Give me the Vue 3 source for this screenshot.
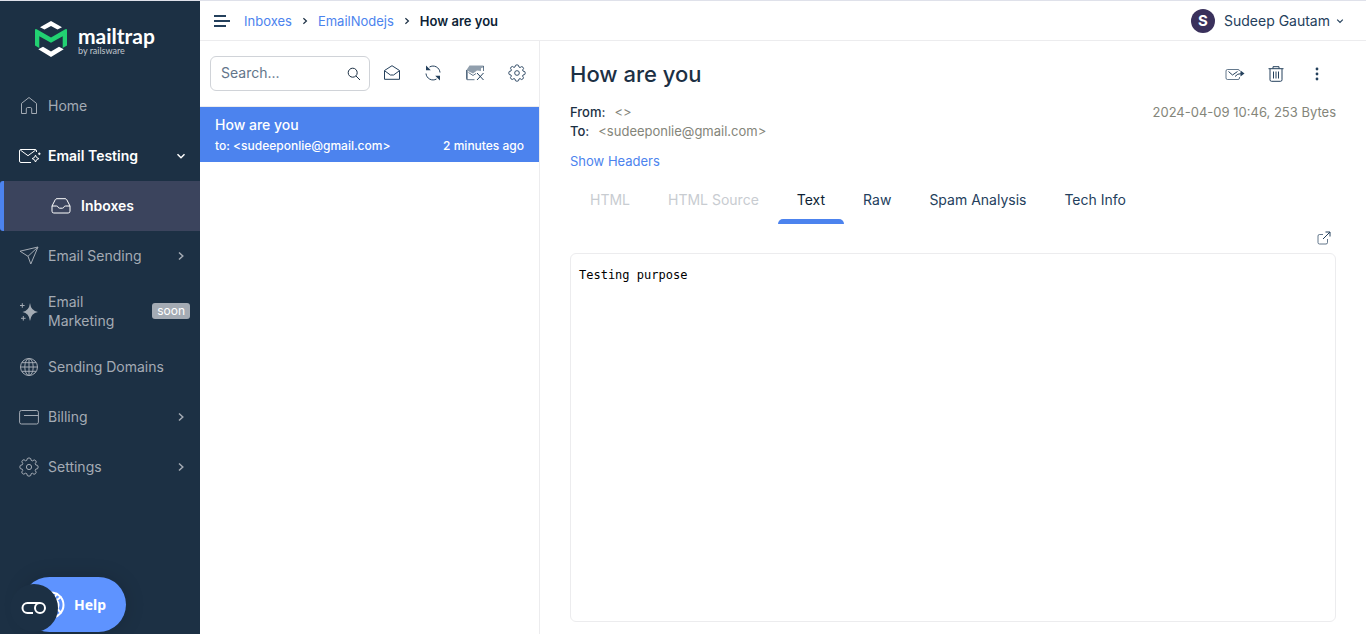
<script setup>
import { ref } from 'vue'

const search = ref('')

const tabs = [
  { label: 'HTML', disabled: true },
  { label: 'HTML Source', disabled: true },
  { label: 'Text', active: true },
  { label: 'Raw' },
  { label: 'Spam Analysis' },
  { label: 'Tech Info' },
]
</script>

<template>
  <div class="app">
    <svg class="defs" aria-hidden="true">
      <symbol id="gear" viewBox="0 0 20 20">
        <path stroke-linejoin="round" d="M8.300 1.500Q10 .3 11.700 1.500L12.200 3.400 13.400 3.900 15.200 2.900Q17.100 3.200 17.300 5L16.200 6.700 16.700 7.900 18.600 8.400Q19.800 10 18.600 11.700L16.700 12.200 16.200 13.400 17.200 15.200Q16.900 17.100 15 17.300L13.400 16.200 12.200 16.700 11.700 18.600Q10 19.800 8.300 18.600L7.800 16.700 6.600 16.200 4.800 17.200Q2.900 16.900 2.700 15L3.800 13.400 3.300 12.200 1.400 11.700Q.2 10 1.400 8.300L3.300 7.800 3.800 6.600 2.800 4.800Q3.100 2.900 5 2.700L6.600 3.800 7.800 3.300z" />
        <circle cx="10" cy="10" r="2.600" />
      </symbol>
      <symbol id="right" viewBox="0 0 10 10"><path d="M3 1.500 6.800 5 3 8.500" /></symbol>
      <symbol id="down" viewBox="0 0 10 10"><path d="M1.500 3.300 5 6.700l3.500-3.400" /></symbol>
    </svg>

    <aside class="sidebar">
      <a class="logo" href="#">
        <svg width="34" height="36" viewBox="0 0 34 36" aria-hidden="true">
          <path fill="#fff" d="M17 0 28 6.300 23.500 8.400 17 4.900l-6.500 3.500L6 6.300zM17 36 4.300 28.200 9 25.700l8 4.800 8-4.800 4.700 2.500z" />
          <path fill="#22d172" d="M1 9.200Q1 7.400 2.700 8.300L17 16.400 31.300 8.300Q33 7.400 33 9.200V24.500L28.700 27V15.200L17 21.800 5.300 15.200V27L1 24.500z" />
        </svg>
        <span class="brand">
          <span class="name">mailtrap</span>
          <span class="by">by railsware</span>
        </span>
      </a>

      <nav class="nav">
        <a class="item" href="#">
          <svg class="ico" viewBox="0 0 20 20"><path d="M2.500 7.400 10 1.500l7.500 5.900V17.500h-4.800v-4.600q0-1.400-1.300-1.400H8.600q-1.300 0-1.300 1.400v4.600H2.500z" /></svg>
          <span class="label">Home</span>
        </a>
        <a class="item current" href="#">
          <svg class="ico wide" viewBox="0 0 22 20"><path d="M12 16.500H2Q.500 16.500.500 15V5Q.500 3.500 2 3.500h14Q17.500 3.500 17.500 5v1M1.500 4.200 9 9.700 16.500 4.200M16.500 9.200l1.100 2.300 2.300 1.100-2.300 1.100-1.100 2.300-1.100-2.300-2.300-1.100 2.300-1.100zM20.300 6.500v2.600M19 7.800h2.600" /></svg>
          <span class="label">Email Testing</span>
          <svg class="chev"><use href="#down" /></svg>
        </a>
        <a class="item sub current" href="#">
          <svg class="ico" viewBox="0 0 20 20"><path d="M1 10 4.300 3.600Q4.800 2.700 6 2.700h8q1.200 0 1.700.9L19 10v5.200q0 1.800-1.800 1.800H2.800Q1 17 1 15.200zM1 10h4.500q1.200 0 1.600 1.100.4 1.100 1.500 1.100h2.800q1.100 0 1.500-1.100.4-1.100 1.600-1.100H19" /></svg>
          <span class="label">Inboxes</span>
        </a>
        <a class="item" href="#">
          <svg class="ico" viewBox="0 0 20 20"><path d="M1 5.200 19 1 11.800 18 9 10.300zM9 10.300 19 1" /></svg>
          <span class="label">Email Sending</span>
          <svg class="chev"><use href="#right" /></svg>
        </a>
        <a class="item tall" href="#">
          <svg class="ico" viewBox="0 0 20 20"><path class="fill" d="M11 1Q12 9 19 10 12 11 11 19 10 11 3.500 10 10 9 11 1z" /><path d="M3.300 1.200v4.600M1 3.500h4.600M4.300 14v4.600M2 16.300h4.600" /></svg>
          <span class="label">Email Marketing</span>
          <span class="soon">soon</span>
        </a>
        <a class="item" href="#">
          <svg class="ico" viewBox="0 0 20 20"><circle cx="10" cy="10" r="8.500" /><ellipse cx="10" cy="10" rx="4.200" ry="8.500" /><path d="M10 1.500v17M1.500 10h17M2.700 5.700h14.600M2.700 14.300h14.600" /></svg>
          <span class="label">Sending Domains</span>
        </a>
        <a class="item" href="#">
          <svg class="ico" viewBox="0 0 20 20"><rect x=".600" y="3.500" width="18.800" height="13.500" rx="1.800" /><path d="M5 8.500h14" /></svg>
          <span class="label">Billing</span>
          <svg class="chev"><use href="#right" /></svg>
        </a>
        <a class="item" href="#">
          <svg class="ico"><use href="#gear" /></svg>
          <span class="label">Settings</span>
          <svg class="chev"><use href="#right" /></svg>
        </a>
      </nav>

      <button class="help" type="button">
        <svg width="28" height="28" viewBox="0 0 28 28" aria-hidden="true"><circle cx="14" cy="14" r="12.500" /><circle cx="14" cy="14" r="7.500" /><path d="m17 7 3.500-5M20 9l4.500-3.500M20.500 18l4 4.500M17.500 21l3 5" /></svg>
        Help
      </button>
      <button class="cookie" type="button" aria-label="Cookie settings">
        <svg width="26" height="14" viewBox="0 0 26 14"><path d="M12 12H6.500a5 5 0 0 1 0-10H19" /><circle cx="19" cy="7" r="5" /></svg>
      </button>
    </aside>

    <div class="page">
      <header class="top">
        <button class="icon-btn burger" type="button" aria-label="Toggle menu">
          <svg width="16" height="14" viewBox="0 0 16 14"><path d="M0 2h12M0 7h16M0 12h12" /></svg>
        </button>
        <nav class="crumbs" aria-label="Breadcrumb">
          <a href="#">Inboxes</a>
          <svg><use href="#right" /></svg>
          <a href="#">EmailNodejs</a>
          <svg><use href="#right" /></svg>
          <strong>How are you</strong>
        </nav>
        <button class="user" type="button">
          <span class="avatar">S</span>
          <span>Sudeep Gautam</span>
          <svg class="chev"><use href="#down" /></svg>
        </button>
      </header>

      <div class="body">
        <section class="list">
          <div class="tools">
            <label class="search">
              <input v-model="search" type="text" placeholder="Search..." aria-label="Search" />
              <svg width="14" height="14" viewBox="0 0 14 14"><circle cx="5.700" cy="5.700" r="4.500" /><path d="m9 9 4 4" /></svg>
            </label>
            <div class="tool-icons">
              <button class="icon-btn" type="button" aria-label="Mark all as read">
                <svg width="18" height="18" viewBox="0 0 18 18"><path d="M1.500 6.500 9 1.700l7.500 4.800v8.800H1.500zM1.700 6.800 7.400 11h3.200l5.700-4.200" /></svg>
              </button>
              <button class="icon-btn" type="button" aria-label="Refresh">
                <svg width="18" height="18" viewBox="0 0 18 18"><path d="M5.500 3A7 7 0 0 1 16 8.500M12.500 15A7 7 0 0 1 2 9.500" /><path class="fill" d="M2 1.500v4.800h4.800zM16 16.500v-4.800h-4.800z" /></svg>
              </button>
              <button class="icon-btn" type="button" aria-label="Clear inbox">
                <svg width="20" height="18" viewBox="0 0 20 18"><path class="shade" d="M4.500 1.500h14v1.800l-2.500 1V7l-4-.5L8 9.500 3 7v8.500H1.500V6z" /><path class="soft" d="M1.500 6v8.700q0 1 1 1H9.500M3.500 8.500 8 11.500l3-2M18.500 2v5" /><path d="m12 9 6.500 7M18.500 9 12 16" /></svg>
              </button>
              <button class="icon-btn" type="button" aria-label="Inbox settings">
                <svg width="18" height="18"><use href="#gear" /></svg>
              </button>
            </div>
          </div>
          <a class="mail" href="#">
            <span class="subject">How are you</span>
            <span class="meta"><span>to: &lt;sudeeponlie@gmail.com&gt;</span><span>2 minutes ago</span></span>
          </a>
        </section>

        <main class="message">
          <div class="head">
            <h1>How are you</h1>
            <div class="actions">
              <button class="icon-btn" type="button" aria-label="Forward">
                <svg width="20" height="16" viewBox="0 0 20 16"><path class="soft" d="M14.500 11v1q0 1.500-1.500 1.500H2.500Q1 13.500 1 12V5q0-1.500 1.500-1.500H13q1.500 0 1.500 1.500" /><path d="M3.500 5.500 7.500 9l5-3.500M10 10.500Q12 7.500 17 7.500" /><path class="fill" d="m15.500 4.500 4 3-4 3z" /></svg>
              </button>
              <button class="icon-btn" type="button" aria-label="Delete">
                <svg width="16" height="16" viewBox="0 0 16 16"><path d="M.500 2.700h15M5 2.500V.700h6v1.800M2 3v10.800q0 1.500 1.500 1.500h9q1.500 0 1.500-1.500V3M5.500 5.500v7M8 5.500v7M10.500 5.500v7" /></svg>
              </button>
              <button class="icon-btn" type="button" aria-label="More">
                <svg width="16" height="16" viewBox="0 0 16 16"><g class="fill"><circle cx="8" cy="3" r="1.400" /><circle cx="8" cy="8" r="1.400" /><circle cx="8" cy="13" r="1.400" /></g></svg>
              </button>
            </div>
          </div>
          <div class="info">
            <div>
              <p><b>From:</b>&lt;&gt;</p>
              <p><b>To:</b>&lt;sudeeponlie@gmail.com&gt;</p>
            </div>
            <p>2024-04-09 10:46, 253 Bytes</p>
          </div>
          <a class="headers" href="#">Show Headers</a>
          <div class="tabs" role="tablist">
            <button
              v-for="t in tabs"
              :key="t.label"
              type="button"
              role="tab"
              :aria-selected="!!t.active"
              :disabled="t.disabled"
              :class="{ active: t.active }"
            >{{ t.label }}</button>
          </div>
          <div class="open">
            <button class="icon-btn" type="button" aria-label="Open in new tab">
              <svg width="14" height="14" viewBox="0 0 14 14"><path class="soft" d="M6 3.500H2.500Q1 3.500 1 5v6.500Q1 13 2.500 13H9q1.500 0 1.500-1.500V8" /><path d="M6 8 13 1M8.500 1H13v4.500" /></svg>
            </button>
          </div>
          <pre class="content">Testing purpose</pre>
        </main>
      </div>
    </div>
  </div>
</template>

<style>
body {
  background: #fff;
}
</style>

<style scoped>
* {
  box-sizing: border-box;
}
.app {
  display: flex;
  min-height: 100vh;
  border-top: 1px solid #dfe1ea;
  font: 14px/20px Inter, "Liberation Sans", sans-serif;
  color: #1c3044;
}
.defs {
  position: absolute;
  width: 0;
  height: 0;
}
a {
  color: inherit;
  text-decoration: none;
}
button {
  padding: 0;
  border: 0;
  background: none;
  font: inherit;
  color: inherit;
}
svg {
  flex: none;
  fill: none;
  stroke: currentColor;
}
.fill {
  fill: currentColor;
  stroke: none;
}
.soft {
  opacity: 0.7;
}
.shade {
  fill: currentColor;
  stroke: none;
  opacity: 0.5;
}

.sidebar {
  flex: none;
  position: relative;
  width: 200px;
  background: #1c3044;
  color: #a4abb4;
}
.logo {
  display: flex;
  gap: 10px;
  height: 80px;
  padding: 20px 0 0 34px;
}
.logo svg {
  stroke: none;
}
.brand {
  display: flex;
  flex-direction: column;
  color: #fff;
}
.name {
  font: bold 21px/30px Lato, sans-serif;
}
.by {
  margin-top: -6px;
  font: 9px/12px Lato, sans-serif;
  color: #c0c6cd;
}
.item {
  display: flex;
  align-items: center;
  height: 50px;
  padding: 0 10px 0 19px;
}
.ico {
  width: 20px;
  height: 20px;
  margin-right: 9px;
}
.ico.wide {
  width: 22px;
  margin-right: 7px;
}
.label {
  flex: 1;
  padding-bottom: 2px;
  line-height: 19px;
}
.item > .chev {
  margin-right: 4px;
  stroke-width: 1.500;
}
.chev {
  width: 10px;
  height: 10px;
}
.current {
  color: #fff;
  font-weight: 600;
}
.sub {
  padding-left: 47px;
  background: #3b445d;
  border-left: 4px solid #4c83ee;
  border-radius: 3px 0 0 3px;
}
.sub .ico {
  margin-right: 10px;
}
.tall {
  height: 61px;
}
.tall .label {
  padding-right: 30px;
}
.soon {
  height: 16px;
  margin-bottom: 1px;
  padding: 0 5px;
  border-radius: 3px;
  background: #a4abb4;
  color: #fff;
  font-size: 12px;
  line-height: 15px;
}
.help {
  position: absolute;
  left: 22px;
  bottom: 2px;
  display: flex;
  align-items: center;
  gap: 9px;
  height: 55px;
  padding: 0 20px 0 15px;
  border-radius: 28px;
  background: #5e93ff;
  color: #fff;
  font: bold 14px/20px "Noto Sans", sans-serif;
  box-shadow: 0 0 20px rgb(0 0 0 / 15%);
}
.help svg {
  stroke-width: 2;
}
.cookie {
  position: absolute;
  left: 10px;
  bottom: 2px;
  display: grid;
  place-items: center;
  width: 48px;
  height: 48px;
  border-radius: 50%;
  background: #1c3044;
  color: #fff;
}
.cookie svg {
  stroke-width: 2;
}

.page {
  flex: 1;
  min-width: 0;
  display: flex;
  flex-direction: column;
}
.top {
  display: flex;
  align-items: center;
  height: 40px;
  padding: 0 22px 0 14px;
  border-bottom: 1px solid #ececee;
}
.icon-btn {
  display: grid;
  place-items: center;
  color: #24405c;
}
.burger svg {
  stroke-width: 2;
}
.crumbs {
  display: flex;
  align-items: center;
  gap: 8px;
  margin-left: 14px;
  font-size: 13px;
}
.crumbs a {
  color: #4c83ee;
}
.crumbs svg {
  width: 10px;
  height: 8px;
  stroke-width: 1.500;
}
.crumbs strong {
  font-weight: 600;
  color: #0d1f36;
}
.user {
  display: flex;
  align-items: center;
  gap: 9px;
  margin-left: auto;
  color: #24405c;
}
.user .chev {
  width: 8px;
  height: 8px;
  margin-left: -3px;
  stroke-width: 1.500;
}
.avatar {
  width: 24px;
  border-radius: 50%;
  background: #3a315c;
  color: #fff;
  font-weight: 700;
  font-size: 15px;
  line-height: 24px;
}
.body {
  flex: 1;
  display: flex;
}
.list {
  flex: none;
  width: 340px;
  border-right: 1px solid #ececee;
}
.tools {
  display: flex;
  align-items: center;
  justify-content: space-between;
  height: 66px;
  padding: 0 13px 0 10px;
  border-bottom: 1px solid #ececee;
}
.tool-icons {
  display: flex;
  gap: 23px;
  margin-bottom: 2px;
}
.search {
  display: flex;
  align-items: center;
  width: 160px;
  height: 35px;
  padding: 0 8px 0 10px;
  border: 1px solid #d0d3d8;
  border-radius: 6px;
}
.search input {
  flex: 1;
  min-width: 0;
  padding: 0 0 2px;
  border: 0;
  outline: 0;
  background: none;
  font: inherit;
  color: inherit;
}
.search input::placeholder {
  color: #63758a;
}
.mail {
  display: block;
  height: 55px;
  padding: 8px 15px 0;
  background: #4c83ee;
  color: #fff;
  font-weight: 500;
}
.subject {
  display: block;
}
.meta {
  display: flex;
  justify-content: space-between;
  font-size: 12px;
  line-height: 22px;
}
.message {
  flex: 1;
  min-width: 0;
  display: flex;
  flex-direction: column;
  padding: 16px 30px 12px;
}
.head {
  display: flex;
  justify-content: space-between;
  align-items: center;
  height: 34px;
}
h1 {
  margin: 0;
  font-size: 22px;
  font-weight: 500;
}
.actions {
  display: flex;
  gap: 20px;
  margin-right: 9px;
}
.actions .icon-btn {
  width: 21px;
}
.info {
  display: flex;
  justify-content: space-between;
  margin-top: 12px;
  font-size: 13px;
  line-height: 19px;
  color: #84857a;
}
.info p {
  margin: 0;
}
.info b {
  margin-right: 9px;
  font-weight: 500;
  color: #1c3044;
}
.headers {
  align-self: flex-start;
  margin-top: 10px;
  font-size: 13px;
  color: #4c83ee;
}
.tabs {
  display: flex;
  height: 53px;
  padding-left: 1px;
}
.tabs button {
  padding: 10px 19px 0;
  border-bottom: 5px solid transparent;
  color: #24405c;
}
.tabs button:disabled {
  color: #c8ccd1;
}
.tabs .active {
  position: relative;
  color: #0d1f36;
}
.tabs .active::after {
  content: "";
  position: absolute;
  inset: auto 0 -5px;
  height: 5px;
  border-radius: 5px 5px 0 0;
  background: #4c83ee;
}
.open {
  display: flex;
  justify-content: flex-end;
  height: 29px;
  padding: 0 5px 2px 0;
}
.content {
  flex: 1;
  margin: 0;
  padding: 12px 8px;
  border: 1px solid #ececee;
  border-radius: 6px;
  color: #000;
  font: 12px/18px "DejaVu Sans Mono", monospace;
}
</style>
